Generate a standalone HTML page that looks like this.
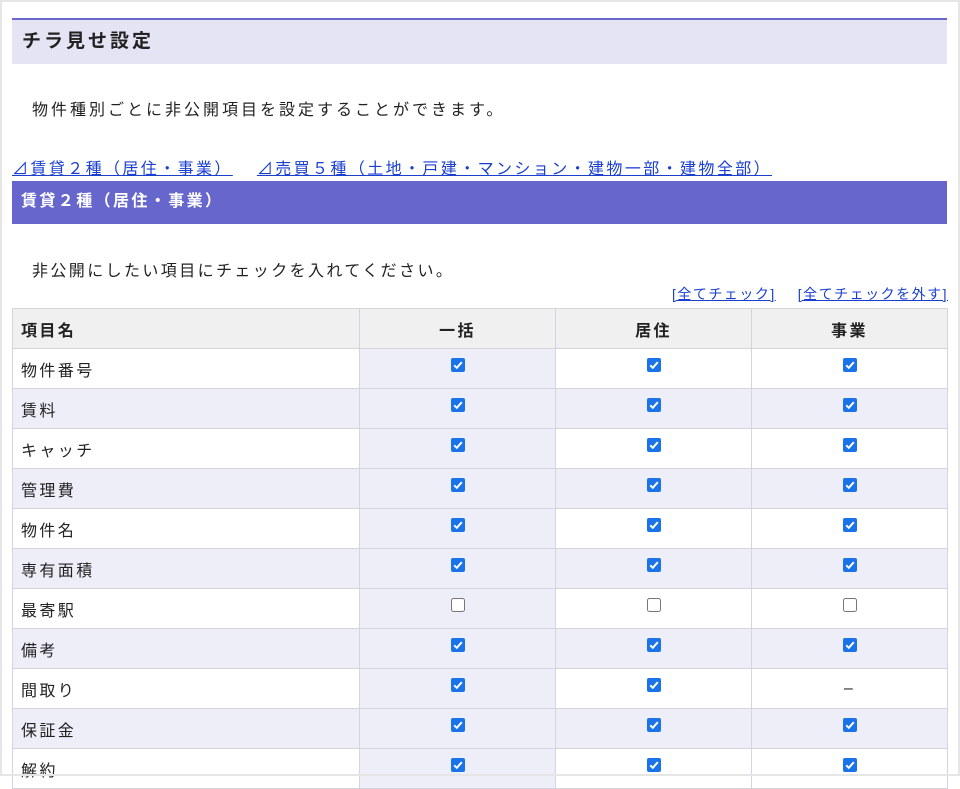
<!DOCTYPE html>
<html><head><meta charset="utf-8"><style>
html,body{margin:0;padding:0;}
body{width:960px;height:776px;overflow:hidden;background:#fff;font-family:"Liberation Sans","Noto Sans CJK JP",sans-serif;color:#222;position:relative;letter-spacing:2.4px;}
.frame{position:absolute;left:0;top:0;width:960px;height:776px;border:2px solid #e6e6e6;box-sizing:border-box;z-index:5;pointer-events:none;}
.title{position:absolute;left:12px;top:18px;width:935px;height:46px;border-top:2px solid #6a66cc;background:#e4e4f5;font-weight:bold;font-size:19px;letter-spacing:3px;line-height:44px;padding-left:10px;box-sizing:border-box;}
.desc{position:absolute;left:32px;top:96px;font-size:16px;letter-spacing:3px;}
.links{position:absolute;left:12px;top:155px;font-size:16px;}
.links a{color:#1a3fd0;text-decoration:underline;margin-right:24px;}
.bar{position:absolute;left:12px;top:181px;width:935px;height:43px;background:#6666cc;color:#fff;font-weight:bold;font-size:16px;line-height:42px;padding-left:9px;box-sizing:border-box;}
.desc2{position:absolute;left:32px;top:257px;font-size:16px;}
.chk{position:absolute;right:12px;top:284px;font-size:14px;letter-spacing:1.5px;}
.chk a{color:#1a3fd0;text-decoration:underline;margin-left:22px;}
table{position:absolute;left:12px;top:308px;width:935px;border-collapse:collapse;table-layout:fixed;}
td,th{border:1px solid #d4d4dc;height:39px;padding:0;font-size:16px;}
th{background:#f0f0f0;font-weight:bold;text-align:center;}
th:first-child{text-align:left;padding-left:8px;}
td{text-align:center;}
td:first-child{padding-left:8px;text-align:left;}
td.c1{background:#eeeef9;}
tr.alt td{background:#eeeef9;}
svg{display:block;margin:-8px auto 0;}
</style></head><body>
<div class="frame"></div>
<div class="title">チラ見せ設定</div>
<div class="desc">物件種別ごとに非公開項目を設定することができます。</div>
<div class="links"><a>⊿賃貸２種（居住・事業）</a><a>⊿売買５種（土地・戸建・マンション・建物一部・建物全部）</a></div>
<div class="bar">賃貸２種（居住・事業）</div>
<div class="desc2">非公開にしたい項目にチェックを入れてください。</div>
<div class="chk"><a>[全てチェック]</a><a>[全てチェックを外す]</a></div>
<svg width="0" height="0" style="position:absolute"><defs>
<symbol id="c" viewBox="0 0 14 14"><rect x="0" y="0" width="14" height="14" rx="2" fill="#1a73e8"/><path d="M3.2 7.3 L5.8 9.8 L10.8 4.2" stroke="#fff" stroke-width="2" fill="none"/></symbol>
<symbol id="u" viewBox="0 0 14 14"><rect x="0.5" y="0.5" width="13" height="13" rx="2" fill="#fff" stroke="#777"/></symbol>
</defs></svg>
<table>
<colgroup><col style="width:347px"><col style="width:196px"><col style="width:196px"><col style="width:196px"></colgroup>
<tr><th>項目名</th><th>一括</th><th>居住</th><th>事業</th></tr>
<tr><td>物件番号</td><td class="c1"><svg width="14" height="14"><use href="#c"/></svg></td><td><svg width="14" height="14"><use href="#c"/></svg></td><td><svg width="14" height="14"><use href="#c"/></svg></td></tr>
<tr class="alt"><td>賃料</td><td class="c1"><svg width="14" height="14"><use href="#c"/></svg></td><td><svg width="14" height="14"><use href="#c"/></svg></td><td><svg width="14" height="14"><use href="#c"/></svg></td></tr>
<tr><td>キャッチ</td><td class="c1"><svg width="14" height="14"><use href="#c"/></svg></td><td><svg width="14" height="14"><use href="#c"/></svg></td><td><svg width="14" height="14"><use href="#c"/></svg></td></tr>
<tr class="alt"><td>管理費</td><td class="c1"><svg width="14" height="14"><use href="#c"/></svg></td><td><svg width="14" height="14"><use href="#c"/></svg></td><td><svg width="14" height="14"><use href="#c"/></svg></td></tr>
<tr><td>物件名</td><td class="c1"><svg width="14" height="14"><use href="#c"/></svg></td><td><svg width="14" height="14"><use href="#c"/></svg></td><td><svg width="14" height="14"><use href="#c"/></svg></td></tr>
<tr class="alt"><td>専有面積</td><td class="c1"><svg width="14" height="14"><use href="#c"/></svg></td><td><svg width="14" height="14"><use href="#c"/></svg></td><td><svg width="14" height="14"><use href="#c"/></svg></td></tr>
<tr><td>最寄駅</td><td class="c1"><svg width="14" height="14"><use href="#u"/></svg></td><td><svg width="14" height="14"><use href="#u"/></svg></td><td><svg width="14" height="14"><use href="#u"/></svg></td></tr>
<tr class="alt"><td>備考</td><td class="c1"><svg width="14" height="14"><use href="#c"/></svg></td><td><svg width="14" height="14"><use href="#c"/></svg></td><td><svg width="14" height="14"><use href="#c"/></svg></td></tr>
<tr><td>間取り</td><td class="c1"><svg width="14" height="14"><use href="#c"/></svg></td><td><svg width="14" height="14"><use href="#c"/></svg></td><td>–</td></tr>
<tr class="alt"><td>保証金</td><td class="c1"><svg width="14" height="14"><use href="#c"/></svg></td><td><svg width="14" height="14"><use href="#c"/></svg></td><td><svg width="14" height="14"><use href="#c"/></svg></td></tr>
<tr><td>解約</td><td class="c1"><svg width="14" height="14"><use href="#c"/></svg></td><td><svg width="14" height="14"><use href="#c"/></svg></td><td><svg width="14" height="14"><use href="#c"/></svg></td></tr>
</table>
</body></html>
